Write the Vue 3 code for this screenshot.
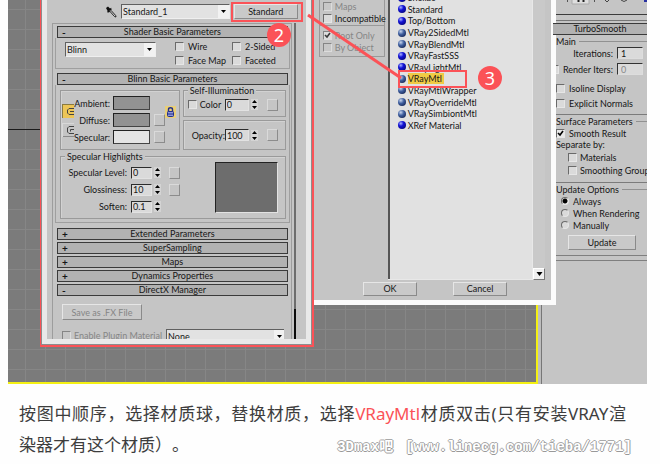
<script setup>
import { ref } from 'vue'

const shaderFlags = ['Wire', '2-Sided', 'Face Map', 'Faceted']
const collapsed = ['Extended Parameters', 'SuperSampling', 'Maps', 'Dynamics Properties']
const swatches = [
  { name: 'Ambient:', tone: 'mid', map: false },
  { name: 'Diffuse:', tone: 'mid', map: true },
  { name: 'Specular:', tone: 'pale', map: true },
]
const highlights = [
  { id: 'level', name: 'Specular Level:', value: '0', map: true },
  { id: 'gloss', name: 'Glossiness:', value: '10', map: true },
  { id: 'soften', name: 'Soften:', value: '0.1', map: false },
]
const materials = [
  { name: 'Shellac' },
  { name: 'Standard' },
  { name: 'Top/Bottom' },
  { name: 'VRay2SidedMtl', dull: true },
  { name: 'VRayBlendMtl', dull: true },
  { name: 'VRayFastSSS' },
  { name: 'VRayLightMtl' },
  { name: 'VRayMtl', dull: true },
  { name: 'VRayMtlWrapper', dull: true },
  { name: 'VRayOverrideMtl', dull: true },
  { name: 'VRaySimbiontMtl', dull: true },
  { name: 'XRef Material' },
]
const picked = ref('VRayMtl')
const update = ref('Always')
</script>

<template>
  <main class="page">
    <figure class="shot">
      <div class="desktop">
        <div class="axis"></div>

        <section class="editor">
          <div class="editor-face">
            <div class="name-row">
              <svg class="dropper" viewBox="0 0 12 12" width="12" height="12">
                <path d="M1 2 3 0.6 5 2.4 6.2 1.8 6.6 4 4 6.6 2 6.2 2.6 5Z" fill="#111" />
                <path d="M4.4 4.8 9.6 10.6 11 11 10.6 9.4 6 4.4" fill="#ddd" stroke="#222" stroke-width="1" />
              </svg>
              <select class="combo grow" aria-label="Material name"><option>Standard_1</option></select>
              <button class="btn type-btn">Standard</button>
            </div>

            <div class="editor-body">
              <div class="rolls">
                <div class="section shader">
                  <button class="bar"><b>-</b><span>Shader Basic Parameters</span></button>
                  <div class="sec-body shader-body">
                    <select class="combo blinn" aria-label="Shader"><option>Blinn</option></select>
                    <div class="flags">
                      <label v-for="f in shaderFlags" :key="f" class="check"><input type="checkbox" />{{ f }}</label>
                    </div>
                  </div>
                </div>

                <div class="section">
                  <button class="bar"><b>-</b><span>Blinn Basic Parameters</span></button>
                  <div class="sec-body blinn-body">
                    <div class="upper">
                      <div class="box colours">
                        <div class="links">
                          <button class="link on" aria-label="Lock ambient and diffuse">
                            <svg viewBox="0 0 12 14" width="12" height="14"><path d="M12 4.500H7L5.500 6V9L7 10.500H12M8 7.500H12" fill="none" stroke="#444" /></svg>
                          </button>
                          <button class="link" aria-label="Lock diffuse and specular">
                            <svg viewBox="0 0 12 14" width="12" height="14"><path d="M12 3.500H7L5.500 5V9L7 10.500H12M12 6.500H8.500V8.500" fill="none" stroke="#444" /></svg>
                          </button>
                        </div>
                        <div class="swatches">
                          <div v-for="s in swatches" :key="s.name" class="swatch-row">
                            <span class="lbl">{{ s.name }}</span>
                            <button class="swatch" :class="s.tone" :aria-label="s.name"></button>
                            <button v-if="s.map" class="map" :aria-label="s.name + ' map'"></button>
                            <i v-else class="map-gap"></i>
                          </div>
                        </div>
                        <button class="lock" aria-label="Lock maps">
                          <svg viewBox="0 0 11 12" width="11" height="12">
                            <path d="M3.500 6V3.500Q3.500 1.800 5.500 1.800T7.500 3.500V6" fill="none" stroke="#24308a" stroke-width="1.400" />
                            <rect x="2.500" y="5.500" width="6" height="5" rx="1" fill="#8f96d8" stroke="#24308a" />
                            <path d="M3 8H8" stroke="#24308a" />
                          </svg>
                        </button>
                      </div>
                      <div class="right-boxes">
                        <div class="box illum">
                          <span class="legend">Self-Illumination</span>
                          <label class="check"><input type="checkbox" />Color</label>
                          <span class="spin"><input value="0" aria-label="Self-illumination" /><svg viewBox="0 0 7 11" width="7" height="11"><path d="M1 4 3.500 1 6 4ZM1 7 3.500 10 6 7Z" /></svg></span>
                          <button class="map" aria-label="Self-illumination map"></button>
                        </div>
                        <div class="box opacity">
                          <label for="opacity">Opacity:</label>
                          <span class="spin"><input id="opacity" value="100" /><svg viewBox="0 0 7 11" width="7" height="11"><path d="M1 4 3.500 1 6 4ZM1 7 3.500 10 6 7Z" /></svg></span>
                          <button class="map" aria-label="Opacity map"></button>
                        </div>
                      </div>
                    </div>
                    <div class="box spec">
                      <span class="legend">Specular Highlights</span>
                      <div class="spec-rows">
                        <div v-for="h in highlights" :key="h.id" class="spec-row">
                          <label :for="h.id" class="lbl">{{ h.name }}</label>
                          <span class="spin"><input :id="h.id" :value="h.value" /><svg viewBox="0 0 7 11" width="7" height="11"><path d="M1 4 3.500 1 6 4ZM1 7 3.500 10 6 7Z" /></svg></span>
                          <button v-if="h.map" class="map" :aria-label="h.name + ' map'"></button>
                          <i v-else class="map-gap"></i>
                        </div>
                      </div>
                      <div class="curve"></div>
                    </div>
                  </div>
                </div>

                <div class="stack">
                  <button v-for="c in collapsed" :key="c" class="bar"><b>+</b><span>{{ c }}</span></button>
                  <button class="bar"><b>-</b><span>DirectX Manager</span></button>
                </div>
                <div class="dx">
                  <button class="btn dim" disabled>Save as .FX File</button>
                  <div class="dx-row">
                    <label class="check dim"><input type="checkbox" disabled />Enable Plugin Material</label>
                    <select class="combo grow" aria-label="Plugin material"><option>None</option></select>
                  </div>
                </div>
              </div>
              <div class="track"><i class="thumb"></i></div>
            </div>
          </div>
        </section>

        <section class="browser">
          <div class="browser-top">
            <div class="filters">
              <div class="filter-box">
                <label class="check dim"><input type="checkbox" disabled />Maps</label>
                <label class="check"><input type="checkbox" />Incompatible</label>
              </div>
              <div class="filter-box second">
                <label class="check dim"><input type="checkbox" checked disabled />Root Only</label>
                <label class="check dim"><input type="checkbox" disabled />By Object</label>
              </div>
            </div>
            <ul class="list">
              <li v-for="m in materials" :key="m.name" :class="{ dull: m.dull, picked: m.name === picked }" @click="picked = m.name">
                <i class="ball"></i><span>{{ m.name }}</span>
              </li>
            </ul>
            <div class="scroll">
              <button aria-label="Scroll down"><svg viewBox="0 0 7 4" width="7" height="4"><path d="M0.500 0H6.500L3.500 4Z" /></svg></button>
            </div>
          </div>
          <div class="actions">
            <button class="btn">OK</button>
            <button class="btn">Cancel</button>
          </div>
        </section>
      </div>

      <aside class="panel">
        <div class="tools">
          <i></i><svg viewBox="0 0 92 5" width="92" height="5">
            <path d="M12.500 0V2M39.500 0V2" stroke="#555" />
            <path d="M17 0V4H34V0" fill="#dedede" stroke="#aaa" />
            <path d="M23.500 0V2M28.500 0V2" stroke="#222" stroke-width="2" />
            <path d="M50 0 52 2 54 0M66 0Q69 3 72 0" fill="none" stroke="#444" />
            <path d="M89 0H92V2H89Z" fill="#2830a0" />
          </svg>
        </div>
        <button class="bar turbo"><span>TurboSmooth</span></button>
        <div class="panel-body">
          <h4><span>Main</span></h4>
          <div class="iter"><label for="iters">Iterations:</label><input id="iters" class="num" value="1" /></div>
          <div class="iter second"><label class="check"><input type="checkbox" />Render Iters:</label><input class="num faint" value="0" aria-label="Render iterations" /></div>
          <label class="check row"><input type="checkbox" />Isoline Display</label>
          <label class="check row"><input type="checkbox" />Explicit Normals</label>
          <h4 class="ruled"><span>Surface Parameters</span></h4>
          <label class="check tight"><input type="checkbox" checked />Smooth Result</label>
          <p>Separate by:</p>
          <label class="check tight inset"><input type="checkbox" />Materials</label>
          <label class="check tight inset"><input type="checkbox" />Smoothing Group</label>
          <h4 class="ruled"><span>Update Options</span></h4>
          <label v-for="u in ['Always', 'When Rendering', 'Manually']" :key="u" class="check radio">
            <input v-model="update" type="radio" name="update" :value="u" />{{ u }}
          </label>
          <button class="btn update">Update</button>
        </div>
        <div class="end"></div>
      </aside>

      <svg class="pointer" viewBox="0 0 120 80" width="120" height="80"><path d="M8 15 101 78" stroke="#fb5257" stroke-width="3" /></svg>
      <i class="mark mark-type"></i>
      <i class="mark mark-item"></i>
      <b class="badge two">2</b>
      <b class="badge three">3</b>
    </figure>

    <p class="caption">
      <span class="full">按图中顺序，选择材质球，替换材质，选择<em>VRayMtl</em>材质双击(只有安装VRAY渲</span>
      <span>染器才有这个材质）。</span>
    </p>
    <div class="watermark"><span>3Dmax吧</span><span>[www.linecg.com/tieba/1771]</span></div>
    <svg class="next" viewBox="0 0 150 2" width="150" height="2">
      <path d="M4 2Q10 0 16 2Z" fill="#a9c8dc" />
      <path d="M130 1H145V2H130Z" fill="#e0a0a4" />
    </svg>
  </main>
</template>

<style>
html, body { overflow: hidden; background: #fefefe; }
</style>

<style scoped>
* { box-sizing: border-box; }
.page {
  position: relative;
  padding: 0 13px 0 8px;
  font-family: Lato, "Liberation Sans", sans-serif;
  font-size: 9px;
  line-height: 11px;
  color: #161616;
}
button, input, select { font: inherit; color: inherit; margin: 0; padding: 0; border-radius: 0; }
button { display: block; cursor: pointer; }
label, span { white-space: nowrap; }
h4, p, ul, figure { margin: 0; padding: 0; font-weight: normal; }
li { list-style: none; }

.shot { position: relative; display: flex; overflow: hidden; }
.desktop {
  position: relative;
  flex: 1;
  min-width: 0;
  display: flex;
  align-items: flex-start;
  padding: 0 0 35px 32px;
  border-right: 2px solid #f4f013;
  border-bottom: 2px solid #f4f013;
  background:
    repeating-linear-gradient(90deg, transparent 0 17px, #868686 17px 18px, transparent 18px 20px),
    repeating-linear-gradient(180deg, transparent 0 9px, #868686 9px 10px, transparent 10px 20px),
    #7b7b7b;
}
.axis { position: absolute; left: 0; top: 129px; width: 32px; height: 1px; background: #1a1a1a; }

/* material editor */
.editor {
  flex: 275 1 0;
  min-width: 0;
  border: 2px solid #fb5257;
  border-top: 0;
}
.editor-face {
  border: 5px solid #e9e9e9;
  border-top: 0;
  background: #c5c5c5;
  box-shadow: 0 0 0 1px #8d8d8d;
  margin: 0 1px 1px 0;
}
.name-row { display: flex; align-items: center; gap: 4px; padding: 4px 8px 4px 58px; }
.dropper { flex: none; }
.combo {
  appearance: none;
  height: 15px;
  padding: 0 3px 0 1px;
  border: 1px solid;
  border-color: #606060 #efefef #efefef #606060;
  background: #e2e2e2 url("data:image/svg+xml,%3Csvg xmlns='http://www.w3.org/2000/svg' viewBox='0 0 11 13'%3E%3Cpath d='M0 0H11V13H0Z' fill='%23f2f2f2'/%3E%3Cpath d='M3 5H8L5.500 8Z'/%3E%3C/svg%3E") right center / 11px 13px no-repeat;
}
.grow { flex: 1; min-width: 0; }
.btn {
  border: 1px solid;
  border-color: #e6e6e6 #8a8a8a #8a8a8a #e6e6e6;
  background: #c9c9c9;
  text-align: center;
}
.type-btn { width: 64px; height: 15px; }
.editor-body { display: flex; gap: 2px; padding-left: 5px; }
.rolls {
  flex: 1;
  min-width: 0;
  border: 1px solid #9d9d9d;
  border-width: 1px 1px 0 1px;
  padding: 2px 1px 0 2px;
}
.track { width: 12px; border-left: 2px solid #6d6d6d; display: flex; flex-direction: column; justify-content: flex-end; }
.thumb { display: block; width: 2px; height: 30px; margin-left: -2px; background: #0c0c0c; }
.section { margin-bottom: 5px; }
.shader { margin-bottom: 4px; }
.bar {
  position: relative;
  display: flex;
  align-items: center;
  justify-content: center;
  width: calc(100% - 4px);
  height: 12px;
  margin: 0 2px;
  border: 1px solid #3a3a3a;
  background: #b2b2b2;
  line-height: 10px;
}
.bar b { position: absolute; left: 4px; top: 0; font-size: 10px; }
.sec-body { border: 1px solid #9f9f9f; border-top: 0; }
.shader-body { display: flex; gap: 19px; padding: 2px 0 1px 9px; align-items: flex-start; }
.blinn { width: 91px; height: 15px; margin-top: 2px; }
.flags { display: grid; grid-template-columns: 57px 50px; row-gap: 1px; }
.check { display: flex; align-items: center; gap: 4px; height: 12px; }
.flags .check { height: 13px; }
.check input {
  appearance: none;
  flex: none;
  width: 9px;
  height: 9px;
  border: 1px solid;
  border-color: #6a6a6a #e6e6e6 #e6e6e6 #6a6a6a;
  background: #dadada;
}
.check input:checked {
  background: #e8e8e8 url("data:image/svg+xml,%3Csvg xmlns='http://www.w3.org/2000/svg' viewBox='0 0 7 7'%3E%3Cpath d='M1 3 3 5 6 1' fill='none' stroke='%23000' stroke-width='1.600'/%3E%3C/svg%3E") center / 7px 7px no-repeat;
}
.dim { color: #858585; }
.dim input { background-color: #c8c8c8; opacity: 0.7; }

.blinn-body { padding: 5px 3px 3px 4px; }
.upper { display: flex; gap: 3px; }
.box { border: 1px solid #9a9a9a; box-shadow: inset 1px 1px 0 #d2d2d2; }
.colours { flex: 1; min-width: 0; display: flex; align-items: center; padding: 0 3px 0 1px; height: 60px; }
.links { flex: none; display: flex; flex-direction: column; gap: 5px; }
.link { width: 12px; height: 14px; border: 0; background: #c5c5c5; box-shadow: inset 1px 1px #d8d8d8, inset 0 -1px #8a8a8a; overflow: hidden; }
.link.on { background: #ecc557; box-shadow: inset 1px 1px #8a7a40; }
.link svg, .lock svg { display: block; }
.swatches { flex: 1; min-width: 0; display: grid; gap: 3px; }
.swatch-row { display: flex; align-items: center; justify-content: flex-end; }
.swatch { flex: none; width: 37px; height: 14px; margin: 0 4px 0 3px; border: 1px solid; border-color: #222 #444 #444 #222; }
.mid { background: #929292; }
.pale { background: #e4e4e4; }
.map { flex: none; width: 11px; height: 12px; border: 1px solid; border-color: #dadada #8c8c8c #8c8c8c #dadada; background: #c5c5c5; }
.map-gap { flex: none; width: 11px; height: 12px; }
.lock { flex: none; width: 11px; height: 12px; margin: 0 0 16px 1px; border: 0; background: #e9cf77; }
.right-boxes { flex: none; width: 103px; display: flex; flex-direction: column; gap: 3px; }
.legend { position: absolute; left: 4px; top: -6px; padding: 0 2px; background: #c5c5c5; }
.illum, .opacity { position: relative; display: flex; align-items: center; height: 27px; padding: 0 7px 0 4px; }
.illum { padding-top: 2px; }
.illum .check { gap: 3px; }
.opacity { height: 30px; padding-left: 8px; }
.illum .spin, .opacity .spin { margin-left: auto; margin-right: 9px; }
.spin { display: flex; align-items: center; gap: 2px; }
.spin input {
  width: 24px;
  height: 12px;
  padding: 0 1px;
  border: 1px solid;
  border-color: #2c2c2c #e2e2e2 #e2e2e2 #2c2c2c;
  background: #dadada;
}
.spec-row .spin input { width: 21px; }
.spin svg { background: #d4d4d4; }
.spec { position: relative; display: flex; justify-content: space-between; height: 63px; margin-top: 6px; padding: 5px 7px 3px 0; }
.spec-rows { display: grid; gap: 5px; align-content: center; width: 119px; padding-top: 2px; }
.spec-row { display: flex; align-items: center; justify-content: flex-end; gap: 4px; }
.spec-row .map, .spec-row .map-gap { margin-left: 4px; }
.curve { width: 63px; height: 51px; border: 1px solid; border-color: #222 #e2e2e2 #e2e2e2 #222; background: #6d6d6d; }

.stack { display: grid; gap: 2px; }
.dx { padding: 8px 6px 0 7px; }
.dx .btn { width: 80px; height: 16px; margin-bottom: 9px; }
.dx-row { display: flex; align-items: flex-start; gap: 4px; height: 10px; overflow: hidden; }
.dx-row .combo { flex: none; width: 120px; margin-left: auto; }
.dx-row .check { gap: 3px; }

/* material browser */
.browser {
  flex: 242 1 0;
  min-width: 0;
  margin-right: -20px;
  border: 5px solid #fcfcfc;
  border-width: 0 5px 5px 0;
  background: #c5c5c5;
  position: relative;
}
.browser-top { display: flex; padding-right: 6px; }
.filters { flex: none; width: 66px; margin: 0 3px 0 5px; }
.filter-box { border: 1px solid #999; border-top: 0; padding-left: 3px; height: 26px; }
.filter-box .check { gap: 3px; }
.filter-box.second { height: 31px; padding-top: 3px; }
.list {
  flex: 1;
  min-width: 0;
  display: grid;
  grid-template-rows: repeat(12, 1fr);
  height: 288px;
  margin-top: -8px;
  padding-bottom: 148px;
  border: 1px solid #e8e8e8;
  border-width: 0 1px 1px 0;
  box-shadow: inset 2px 0 0 #555;
  background: #e1e1e1;
  overflow: hidden;
}
.list li { display: flex; align-items: center; gap: 2px; padding-left: 10px; min-height: 0; }
.ball { flex: none; width: 8px; height: 8px; border-radius: 50%; background: radial-gradient(circle at 35% 30%, #a9b4ff, #1414d8 35%, #00005a); }
.dull .ball { background: radial-gradient(circle at 35% 30%, #c8d6ee, #3f5f9f 40%, #08123a); }
.picked span { background: #f0cb45; padding-right: 2px; }
.scroll { flex: none; width: 12px; display: flex; align-items: flex-end; background: #c9c9c9; }
.scroll button { width: 12px; height: 12px; border: 1px solid; border-color: #fff #777 #777 #fff; background: #efefef; }
.scroll svg { display: block; margin: 0 auto; }
.actions { display: flex; justify-content: flex-end; gap: 36px; padding: 2px 44px 4px 0; }
.actions .btn { width: 54px; height: 14px; line-height: 10px; }

/* modifier panel */
.panel { flex: none; width: 109px; border-left: 3px solid #bdbdbd; box-shadow: inset 1px 0 0 #777; background: #c5c5c5; overflow: hidden; }
.tools { height: 21px; border-bottom: 1px solid #777; padding-left: 14px; display: grid; grid-template-rows: 1fr; }
.tools i { grid-area: 1 / 1; height: 15px; border-bottom: 1px solid #3c3c3c; }
.tools svg { grid-area: 1 / 1; }
.turbo { margin: 2px 0 0 12px; border-width: 1px 0; width: calc(100% - 12px); }
.panel-body { padding-left: 15px; }
h4 { display: flex; height: 12px; align-items: center; }
h4::after { content: ""; flex: 1; height: 1px; background: #919191; margin-left: 3px; }
h4.ruled { border-top: 1px solid #7b7b7b; height: 13px; }
.iter { display: flex; align-items: center; justify-content: flex-end; gap: 4px; height: 12px; padding-right: 4px; }
.iter.second { margin: 4px 0 6px; }
.iter .check { gap: 4px; }
.num { flex: none; width: 26px; height: 12px; padding: 0 3px; border: 1px solid; border-color: #333 #ddd #ddd #333; background: #dadada; }
.faint { color: #888; }
.row { height: 15px; }
.row + .ruled { margin-top: 3px; }
.tight { height: 12px; }
p { height: 12px; }
.inset { padding-left: 12px; height: 13px; gap: 3px; }
.inset + .ruled { margin-top: 5px; }
.radio { padding-left: 5px; }
.radio input { border-radius: 50%; width: 8px; height: 8px; }
.radio input:checked { background: radial-gradient(circle, #000 0 2px, #eee 3px); }
.update { width: 68px; height: 15px; margin: 4px 0 5px 12px; }
.end { border: 1px solid #7f7f7f; border-width: 1px 0; height: 6px; margin-left: 12px; }

/* annotations */
.pointer { position: absolute; left: 292px; top: 0; }
.mark { position: absolute; border: 2px solid #fb5257; }
.mark-type { left: 223px; top: 2px; width: 72px; height: 20px; }
.mark-item { left: 390px; top: 70px; width: 69px; height: 18px; }
.badge {
  position: absolute;
  width: 24px;
  height: 24px;
  border-radius: 50%;
  background: #fb5257;
  color: #fff;
  font: 18px/24px "Noto Sans", sans-serif;
  text-align: center;
}
.two { left: 259px; top: 23px; }
.three { left: 470px; top: 66px; }

.caption {
  height: auto;
  padding: 14px 21px 0 11px;
  font: 17px/31px "Noto Sans", "Noto Sans CJK SC", sans-serif;
  color: #3d3d3d;
  text-spacing-trim: space-all;
}
.caption span { display: block; white-space: normal; }
.full { text-align: justify; text-align-last: justify; }
.caption em { font-style: normal; color: #fb5257; }
.watermark {
  position: absolute;
  right: 28px;
  top: 439px;
  display: flex;
  gap: 12px;
  font: bold 14px/16px "Liberation Mono", "Noto Sans CJK SC", monospace;
  color: #fff;
  text-shadow: 1px 0 #999, -1px 0 #aaa, 0 1px #999, 0 -1px #aaa;
}
.next { position: absolute; right: 10px; top: 462px; }
</style>
